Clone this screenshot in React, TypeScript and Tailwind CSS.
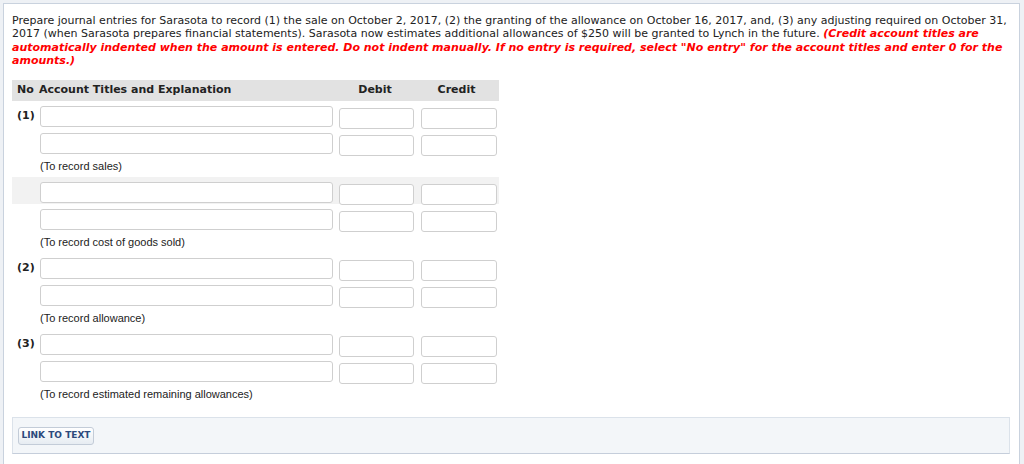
import React from "react";

type Row = { no?: string; shaded?: boolean };
type Entry = { rows: Row[]; note: string };

const entries: Entry[] = [
  { rows: [{ no: "(1)" }, {}], note: "(To record sales)" },
  { rows: [{ shaded: true }, {}], note: "(To record cost of goods sold)" },
  { rows: [{ no: "(2)" }, {}], note: "(To record allowance)" },
  { rows: [{ no: "(3)" }, {}], note: "(To record estimated remaining allowances)" },
];

const Box = ({ w }: { w: string }) => (
  <input
    type="text"
    className={`${w} h-[21px] rounded-[3px] border border-[#cfcfcf] bg-white outline-none`}
  />
);

const JournalRow = ({ row }: { row: Row }) => (
  <div
    className={`flex h-[27px] items-start pt-[5px] ${row.shaded ? "bg-[#f2f2f2]" : ""}`}
  >
    <div className="w-[28px] pl-[5px] pt-[3px] text-[11px] leading-[14px] font-bold text-[#222]">
      {row.no}
    </div>
    <Box w="w-[293px]" />
    <div className="ml-[6px]">
      <Box w="w-[75px]" />
    </div>
    <div className="ml-[7px]">
      <Box w="w-[76px]" />
    </div>
  </div>
);

export default function App() {
  return (
    <div className="min-h-[464px] bg-[#eef1f5] pt-[3px] pl-[3px] pr-[4px] font-['DejaVu_Sans',sans-serif]">
      <div className="min-h-[461px] border-l border-t border-r border-[#c9d2de] bg-white pl-[8px] pr-[8px] pt-[10px]">
        <p className="text-[11px] leading-[13.3px] text-[#222]">
          Prepare journal entries for Sarasota to record (1) the sale on October 2, 2017, (2) the
          granting of the allowance on October 16, 2017, and, (3) any adjusting required on October
          31, 2017 (when Sarasota prepares financial statements). Sarasota now estimates additional
          allowances of $250 will be granted to Lynch in the future.{" "}
          <span className="font-bold italic text-[#ff0000]">
            (Credit account titles are automatically indented when the amount is entered. Do not
            indent manually. If no entry is required, select "No entry" for the account titles and
            enter 0 for the amounts.)
          </span>
        </p>

        <div className="mt-[13px] w-[487px]">
          <div className="flex h-[21px] items-center bg-[#e2e2e2] text-[11px] font-bold text-[#222]">
            <div className="w-[27px] pl-[5px]">No</div>
            <div className="w-[299px]">Account Titles and Explanation</div>
            <div className="w-[82px] pr-[8px] text-center">Debit</div>
            <div className="w-[79px] pr-[6px] text-center">Credit</div>
          </div>

          {entries.map((e, i) => (
            <div key={i}>
              {e.rows.map((r, j) => (
                <JournalRow key={j} row={r} />
              ))}
              <div className="flex h-[22px] items-center pl-[28px] font-['Liberation_Sans',sans-serif] text-[11px] text-[#222]">
                {e.note}
              </div>
            </div>
          ))}
        </div>

        <div className="mt-[12px] mr-[1px] flex h-[37px] items-center border border-[#dbe2ea] border-b-[#c5cedb] bg-[#f3f6f9] pl-[5px]">
          <button className="h-[18px] w-[76px] rounded-[3px] border border-[#c3ccd8] bg-gradient-to-b from-white to-[#e6ecf2] text-[9px] font-bold text-[#2c4a7c]">
            LINK TO TEXT
          </button>
        </div>
      </div>
    </div>
  );
}
